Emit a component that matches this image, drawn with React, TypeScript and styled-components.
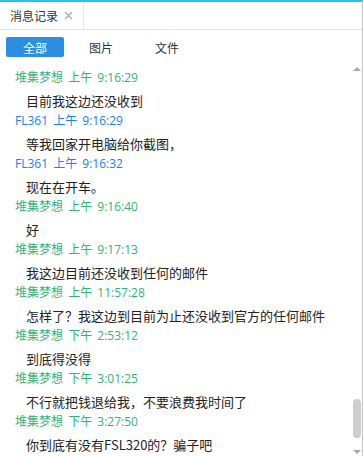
import React from 'react';
import styled, { createGlobalStyle } from 'styled-components';

const GlobalStyle = createGlobalStyle`
  html, body {
    margin: 0;
    padding: 0;
    background: #fff;
  }
  body {
    font-family: "Noto Sans CJK SC", "Liberation Sans", sans-serif;
  }
`;

type Sender = 'peer' | 'me';

interface Message {
  name: string;
  sender: Sender;
  period: string;
  time: string;
  text: string;
}

const messages: Message[] = [
  { name: '堆集梦想', sender: 'peer', period: '上午', time: '9:16:29', text: '目前我这边还没收到' },
  { name: 'FL361', sender: 'me', period: '上午', time: '9:16:29', text: '等我回家开电脑给你截图，' },
  { name: 'FL361', sender: 'me', period: '上午', time: '9:16:32', text: '现在在开车。' },
  { name: '堆集梦想', sender: 'peer', period: '上午', time: '9:16:40', text: '好' },
  { name: '堆集梦想', sender: 'peer', period: '上午', time: '9:17:13', text: '我这边目前还没收到任何的邮件' },
  { name: '堆集梦想', sender: 'peer', period: '上午', time: '11:57:28', text: '怎样了？我这边到目前为止还没收到官方的任何邮件' },
  { name: '堆集梦想', sender: 'peer', period: '下午', time: '2:53:12', text: '到底得没得' },
  { name: '堆集梦想', sender: 'peer', period: '下午', time: '3:01:25', text: '不行就把钱退给我，不要浪费我时间了' },
  { name: '堆集梦想', sender: 'peer', period: '下午', time: '3:27:50', text: '你到底有没有FSL320的？骗子吧' },
];

const Window = styled.div`
  width: 363px;
  height: 456px;
  box-sizing: border-box;
  border-top: 2px solid #27c2f1;
  border-right: 1px solid #c4c4c4;
  display: flex;
  flex-direction: column;
  overflow: hidden;
`;

const TabBar = styled.div`
  height: 27px;
  flex: none;
  display: flex;
  border-bottom: 1px solid #e6e6e6;
`;

const Tab = styled.div`
  width: 84px;
  box-sizing: border-box;
  border-right: 1px solid #e6e6e6;
  display: flex;
  align-items: center;
  padding-left: 10px;
  gap: 6px;
  font-size: 12px;
  color: #333;
`;

const CloseIcon = styled.svg`
  width: 9px;
  height: 9px;
  flex: none;
`;

const FilterRow = styled.div`
  height: 33px;
  flex: none;
  display: flex;
  align-items: flex-start;
  padding: 7px 0 0 6px;
  box-sizing: border-box;
`;

const FilterButton = styled.div<{ $active?: boolean; $width: number }>`
  width: ${({ $width }) => $width}px;
  height: 20px;
  border-radius: 2px;
  display: flex;
  align-items: center;
  justify-content: center;
  font-size: 12px;
  background: ${({ $active }) => ($active ? '#2b8ee2' : 'transparent')};
  color: ${({ $active }) => ($active ? '#fff' : '#333')};
`;

const Body = styled.div`
  flex: 1;
  display: flex;
  min-height: 0;
`;

const List = styled.div`
  flex: 1;
  padding: 5px 0 0 15px;
  overflow: hidden;
`;

const Item = styled.div`
  height: 43px;
`;

const Header = styled.div<{ $sender: Sender }>`
  height: 20px;
  line-height: 20px;
  font-family: "Open Sans", "Noto Sans CJK SC", sans-serif;
  font-size: 12px;
  word-spacing: 2px;
  white-space: nowrap;
  color: ${({ $sender }) => ($sender === 'peer' ? '#35b276' : '#1a80f2')};
`;

const Content = styled.div`
  padding: 3px 0 0 11px;
  height: 20px;
  line-height: 20px;
  font-size: 13px;
  color: #222;
  white-space: nowrap;
`;

const ScrollBar = styled.div`
  width: 11px;
  flex: none;
  display: flex;
  flex-direction: column;
  align-items: center;
  padding: 4px 0 2px;
  box-sizing: border-box;
`;

const Arrow = styled.div<{ $dir: 'up' | 'down' }>`
  width: 0;
  height: 0;
  border-left: 4px solid transparent;
  border-right: 4px solid transparent;
  ${({ $dir }) =>
    $dir === 'up' ? 'border-bottom: 4px solid #a6a6a6;' : 'border-top: 4px solid #a6a6a6;'}
`;

const Track = styled.div`
  flex: 1;
  width: 8px;
  display: flex;
  flex-direction: column;
  justify-content: flex-end;
  padding-bottom: 12px;
`;

const Thumb = styled.div`
  height: 39px;
  border-radius: 4px;
  background: #cdcdcd;
`;

export default function App() {
  return (
    <>
      <GlobalStyle />
      <Window>
        <TabBar>
          <Tab>
            消息记录
            <CloseIcon viewBox="0 0 9 9">
              <path d="M1 1 L8 8 M8 1 L1 8" stroke="#a8a8a8" strokeWidth="1.2" />
            </CloseIcon>
          </Tab>
        </TabBar>
        <FilterRow>
          <FilterButton $active $width={58}>全部</FilterButton>
          <FilterButton $width={74}>图片</FilterButton>
          <FilterButton $width={58}>文件</FilterButton>
        </FilterRow>
        <Body>
          <List>
            {messages.map((m, i) => (
              <Item key={i}>
                <Header $sender={m.sender}>
                  {m.name} {m.period} {m.time}
                </Header>
                <Content>{m.text}</Content>
              </Item>
            ))}
          </List>
          <ScrollBar>
            <Arrow $dir="up" />
            <Track>
              <Thumb />
            </Track>
            <Arrow $dir="down" />
          </ScrollBar>
        </Body>
      </Window>
    </>
  );
}
